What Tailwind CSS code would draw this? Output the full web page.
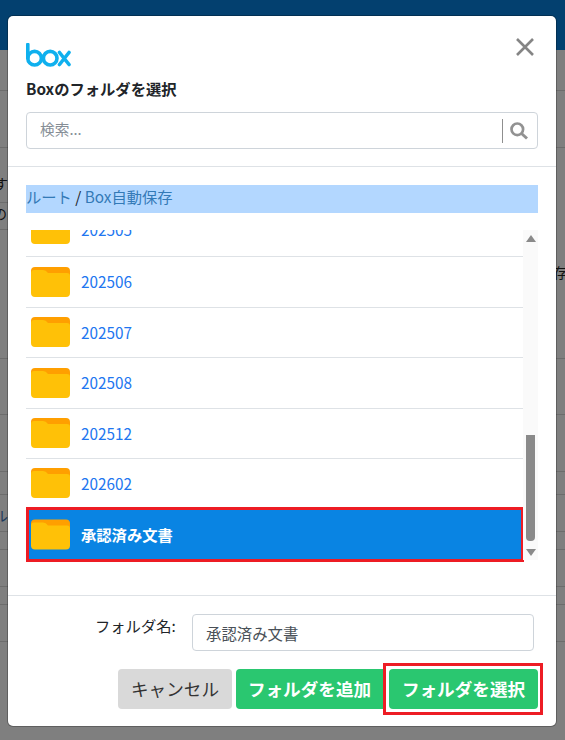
<!DOCTYPE html>
<html lang="ja">
<head>
<meta charset="utf-8">
<script src="https://cdn.jsdelivr.net/npm/@tailwindcss/browser@4"></script>
</head>
<body class="m-0 h-[740px] w-[565px] overflow-hidden bg-[#7f7f7f] font-['Noto_Sans_CJK_JP','Noto_Sans',sans-serif] text-[#212529]">
<div class="relative h-[740px] w-[565px] overflow-hidden">
  <!-- page behind the dialog -->
  <div class="h-[50px] bg-[#03406f]"></div>
  <div class="h-[41px] border-b border-[#6c6c6c]"></div>
  <div class="h-[57px] border-b border-[#6c6c6c]"></div>
  <div class="flex h-[55px] w-[20px] items-center border-b border-[#6c6c6c] pt-[16px] text-[14px] text-[#111]"><span class="-ml-[6px]">す</span></div>
  <div class="flex h-[27px] w-[20px] items-center border-b border-[#6c6c6c] pb-[6px] text-[14px] text-[#111]"><span class="-ml-[7px]">の</span></div>
  <div class="flex h-[129px] items-start justify-end border-b border-[#6c6c6c] pt-[32px] text-[14px] text-[#111]"><span class="w-[12px] overflow-hidden whitespace-nowrap">存</span></div>
  <div class="h-[56px] border-b border-[#6c6c6c]"></div>
  <div class="h-[57px] border-b border-[#6c6c6c]"></div>
  <div class="h-[23px] border-b border-[#6c6c6c]"></div>
  <div class="flex h-[37px] items-center border-b border-[#6c6c6c] pt-[4px] text-[14px] text-[#1d3a5c]"><span class="-ml-[6px]">ル</span></div>
  <div class="h-[18px] border-b border-[#6c6c6c]"></div>
  <div class="h-[37px] border-b border-[#6c6c6c]"></div>
  <div class="h-[18px] border-b border-[#6c6c6c]"></div>
  <div class="h-[37px] border-b border-[#6c6c6c]"></div>

  <!-- dialog -->
  <div class="absolute left-[8px] top-[16px] flex h-[710px] w-[548px] flex-col rounded-[5px] bg-white shadow-[0_0_0_1px_rgba(0,0,0,0.25)]">
    <div class="relative h-[151px] border-b border-[#dee2e6] px-[18px]">
      <svg class="absolute left-[18px] top-[27px]" width="45" height="24" viewBox="0 0 45 24" fill="none" stroke="#0fb0ee" stroke-width="3.6">
        <path d="M1.8 1.5V15" stroke-linecap="round"/>
        <circle cx="8.6" cy="15.2" r="6.8"/>
        <circle cx="24.2" cy="15.2" r="6.8"/>
        <path d="M33.5 9.5L43 21.5M43 9.5L33.5 21.5" stroke-linecap="round"/>
      </svg>
      <svg class="absolute right-[22px] top-[22px]" width="18" height="18" viewBox="0 0 18 18" fill="none" stroke="#858585" stroke-width="2.6"><path d="M1 1L17 17M17 1L1 17"/></svg>
      <h5 class="absolute left-[18px] top-[62px] text-[15.3px] leading-[20px] font-bold text-[#212529]">Boxのフォルダを選択</h5>
      <div class="absolute left-[18px] top-[96px] flex h-[37px] w-[512px] items-center rounded-[4px] border border-[#ced4da] bg-white pl-[13px]">
        <span class="-mt-[3px] flex-1 text-[14.7px] leading-[20px] text-[#868e96]">検索...</span>
        <span class="h-[24px] w-px bg-[#8f8f8f]"></span>
        <svg class="mr-[9px] ml-[7px]" width="18" height="18" viewBox="0 0 18 18" fill="none" stroke="#929292"><circle cx="7.3" cy="7.3" r="5.8" stroke-width="2.7"/><path d="M11.5 11.5L17 16.5" stroke-width="3"/></svg>
      </div>
    </div>
    <div class="flex flex-1 flex-col px-[18px] pt-[18px]">
      <div class="h-[28px] bg-[#b3d7ff] text-[15.3px] leading-[23px] whitespace-nowrap text-[#212529]"><span class="text-[#337ab7]">ルート</span> / <span class="text-[#337ab7]">Box自動保存</span></div>
      <div class="relative mt-[17px] h-[332px] overflow-hidden">
        <div class="w-[498px] -mt-[26px]">
          <div class="flex h-[53px] items-center border-b border-[#dee2e6] pl-[5px] pb-[2px]">
            <svg width="39" height="30" viewBox="0 0 39 30"><path d="M8 0H35Q39 0 39 4V12H0V4Q0 0 4 0Z" fill="#ff9f00"/><path d="M3 3H12Q15 3 17 6H36Q39 6 39 9V26Q39 30 35 30H4Q0 30 0 26V6Q0 3 3 3Z" fill="#ffc107"/></svg>
            <span class="ml-[11px] text-[15.3px] text-[#2176f0]">202505</span>
          </div>
          <div class="flex h-[50.5px] items-center border-b border-[#dee2e6] pl-[5px]">
            <svg width="39" height="30" viewBox="0 0 39 30"><path d="M8 0H35Q39 0 39 4V12H0V4Q0 0 4 0Z" fill="#ff9f00"/><path d="M3 3H12Q15 3 17 6H36Q39 6 39 9V26Q39 30 35 30H4Q0 30 0 26V6Q0 3 3 3Z" fill="#ffc107"/></svg>
            <span class="ml-[11px] text-[15.3px] text-[#2176f0]">202506</span>
          </div>
          <div class="flex h-[50.5px] items-center border-b border-[#dee2e6] pl-[5px]">
            <svg width="39" height="30" viewBox="0 0 39 30"><path d="M8 0H35Q39 0 39 4V12H0V4Q0 0 4 0Z" fill="#ff9f00"/><path d="M3 3H12Q15 3 17 6H36Q39 6 39 9V26Q39 30 35 30H4Q0 30 0 26V6Q0 3 3 3Z" fill="#ffc107"/></svg>
            <span class="ml-[11px] text-[15.3px] text-[#2176f0]">202507</span>
          </div>
          <div class="flex h-[50.5px] items-center border-b border-[#dee2e6] pl-[5px]">
            <svg width="39" height="30" viewBox="0 0 39 30"><path d="M8 0H35Q39 0 39 4V12H0V4Q0 0 4 0Z" fill="#ff9f00"/><path d="M3 3H12Q15 3 17 6H36Q39 6 39 9V26Q39 30 35 30H4Q0 30 0 26V6Q0 3 3 3Z" fill="#ffc107"/></svg>
            <span class="ml-[11px] text-[15.3px] text-[#2176f0]">202508</span>
          </div>
          <div class="flex h-[50.5px] items-center border-b border-[#dee2e6] pl-[5px]">
            <svg width="39" height="30" viewBox="0 0 39 30"><path d="M8 0H35Q39 0 39 4V12H0V4Q0 0 4 0Z" fill="#ff9f00"/><path d="M3 3H12Q15 3 17 6H36Q39 6 39 9V26Q39 30 35 30H4Q0 30 0 26V6Q0 3 3 3Z" fill="#ffc107"/></svg>
            <span class="ml-[11px] text-[15.3px] text-[#2176f0]">202512</span>
          </div>
          <div class="flex h-[48px] items-center pl-[5px]">
            <svg width="39" height="30" viewBox="0 0 39 30"><path d="M8 0H35Q39 0 39 4V12H0V4Q0 0 4 0Z" fill="#ff9f00"/><path d="M3 3H12Q15 3 17 6H36Q39 6 39 9V26Q39 30 35 30H4Q0 30 0 26V6Q0 3 3 3Z" fill="#ffc107"/></svg>
            <span class="ml-[11px] text-[15.3px] text-[#2176f0]">202602</span>
          </div>
          <div class="flex h-[55px] items-center border-[3px] border-[#ed1c24] bg-[#0984e3] pl-[2px]">
            <svg width="39" height="31" viewBox="0 0 39 30"><path d="M8 0H35Q39 0 39 4V12H0V4Q0 0 4 0Z" fill="#ff9f00"/><path d="M3 3H12Q15 3 17 6H36Q39 6 39 9V26Q39 30 35 30H4Q0 30 0 26V6Q0 3 3 3Z" fill="#ffc107"/></svg>
            <span class="ml-[11px] text-[15.3px] font-bold text-white">承認済み文書</span>
          </div>
        </div>
        <div class="absolute top-0 right-0 flex h-[330px] w-[15px] flex-col items-center bg-[#fafafa]">
          <span class="mt-[5px] h-0 w-0 border-x-[5px] border-b-[7px] border-x-transparent border-b-[#8a8a8a]"></span>
          <span class="mt-[193px] h-[106px] w-[9px] rounded-b-[4px] bg-[#8a8a8a]"></span>
          <span class="mt-[8px] h-0 w-0 border-x-[5px] border-t-[7px] border-x-transparent border-t-[#8a8a8a]"></span>
        </div>
      </div>
      <div class="-mx-[18px] mt-[33px] flex-1 border-t border-[#dee2e6] px-[18px] pt-[18px]">
        <div class="flex items-start">
          <span class="ml-[69px] w-[97px] text-[15.3px] leading-[22px] whitespace-nowrap text-[#212529]">フォルダ名:</span>
          <div class="flex h-[37px] w-[342px] items-center rounded-[4px] border border-[#ced4da] pt-[2px] pl-[13px] text-[15.4px] text-[#495057]">承認済み文書</div>
        </div>
        <div class="mt-[12px] flex items-center justify-end">
          <button class="h-[40px] w-[114px] rounded-[4px] bg-[#d9d9d9] text-[17.6px] font-normal text-[#333]">キャンセル</button>
          <button class="ml-[4px] h-[40px] w-[147px] rounded-l-[4px] bg-[#2ac770] text-[17.6px] font-bold text-white">フォルダを追加</button>
          <div class="-mr-[5px] border-[3px] border-[#ed1c24] bg-white py-[3px] pr-[2px] pl-[3px]">
            <button class="block h-[40px] w-[149px] rounded-[4px] bg-[#2ac770] text-[17.6px] font-bold text-white">フォルダを選択</button>
          </div>
        </div>
      </div>
    </div>
  </div>
</div>
</body>
</html>
